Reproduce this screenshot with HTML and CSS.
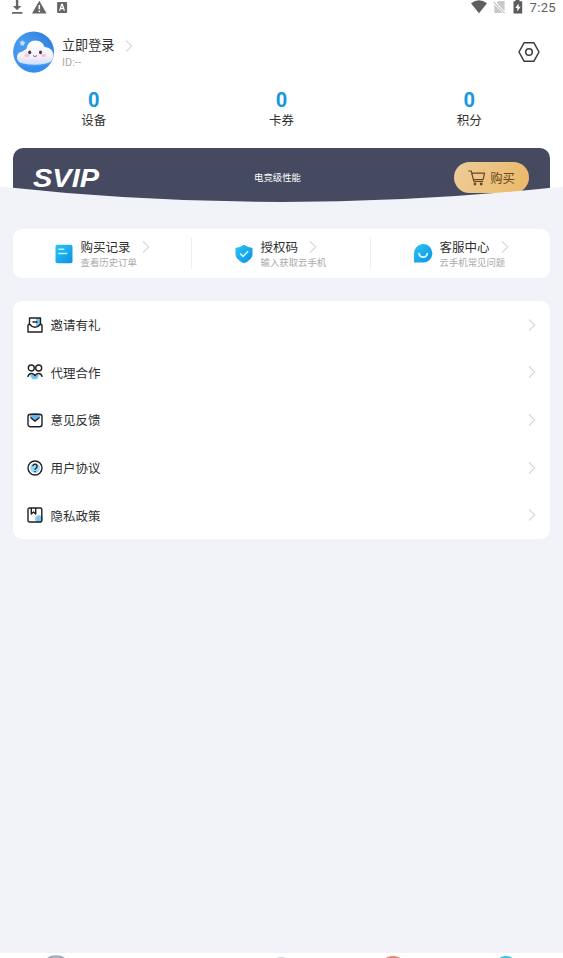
FILE: index.html
```html
<!DOCTYPE html>
<html lang="zh-CN">
<head>
<meta charset="utf-8">
<title>我的</title>
<link rel="stylesheet" href="styles.css">
</head>
<body>
<svg width="0" height="0" class="defs">
  <defs>
    <linearGradient id="blue" x1="0" y1="0" x2="1" y2="1"><stop offset="0" stop-color="#2bc6f4"/><stop offset="1" stop-color="#0c8fe6"/></linearGradient>
    <linearGradient id="sky" x1="1" y1="0" x2="0" y2="1"><stop offset="0" stop-color="#2878d8"/><stop offset=".5" stop-color="#479bee"/><stop offset="1" stop-color="#3f92ee"/></linearGradient>
    <linearGradient id="cloud" x1="0" y1="0" x2="0" y2="1"><stop offset="0" stop-color="#fff"/><stop offset=".65" stop-color="#f3f1fb"/><stop offset="1" stop-color="#cfdcf8"/></linearGradient>
    <symbol id="chevron" viewBox="0 0 8 14"><path d="M1 1.5 6.8 7 1 12.5" fill="none" stroke="currentColor" stroke-width="1.1"/></symbol>
  </defs>
</svg>
<header class="hero">
  <div class="status">
    <svg class="notices" width="80" height="15" viewBox="0 0 80 15" fill="#666">
      <path d="M15.9 0h2.4v6h3L17.1 10.2 12.9 6h3zM12 12h10.4v1.7H12z"/>
      <path fill-rule="evenodd" d="M39.3 .8 46.6 13.6H32zM38.5 5v4.3h1.6V5zM38.5 10.5v1.6h1.6v-1.6z"/>
      <path fill-rule="evenodd" d="M58 2h8.3q.8 0 .8.8v9.4q0 .8-.8.8H58q-.9 0-.9-.8V2.800q0-.8.9-.8zM61.200 3.800 59 10.800h1.300l.4-1.500h2.600l.4 1.500H65L62.800 3.800zM61.900 5.500l.8 2.600h-1.500z"/>
    </svg>
    <div class="system">
      <svg width="56" height="15" viewBox="0 0 56 15">
        <path d="M1 3.200Q9 -2.800 17 3.200L9 13.200z" fill="#5e5e5e"/>
        <path d="M24.300 4.500 32.800 13H24.300zM26.500 2.500 28.500 1h6.100v10.200z" fill="#c9c9c9"/>
        <path d="M23.500 1.800 34.800 13.300" stroke="#aaa" fill="none"/>
        <path fill-rule="evenodd" d="M45.500 0h4v1.200h2.700v12.300H43.500V1.200h2zM48.600 3.500 45.300 8h2v3.600l3.300-4.800h-2z" fill="#5c5c5c"/>
      </svg>
      <span class="clock">7:25</span>
    </div>
  </div>
  <div class="profile">
    <svg class="avatar" viewBox="0 0 42 42">
      <circle cx="20.600" cy="21" r="20.500" fill="url(#sky)"/>
      <path d="M7 34Q21 38 36 33 31 41 21 41.500 12 41 7 34z" fill="#348df1"/>
      <path d="M10 32.500Q3.500 31.500 4 25.500 4.700 20.800 9.500 20.500 11.500 18.500 13.300 18.200 14.500 9.500 22.500 9.500 29.500 9.800 31.500 16 39.500 16.500 40.500 23.500 40.600 31 33 32.500 22 35 10 32.500z" fill="url(#cloud)"/>
      <ellipse cx="14" cy="24.500" rx="2.700" ry="1.700" fill="#f9c5d6"/><ellipse cx="30.500" cy="24.500" rx="2.700" ry="1.700" fill="#f9c5d6"/>
      <ellipse cx="16.700" cy="21.300" rx="1.500" ry="1.900" fill="#4c344b"/><ellipse cx="27.500" cy="21.300" rx="1.500" ry="1.900" fill="#4c344b"/>
      <path d="M20 24.500Q22 26.800 24 24.500" fill="none" stroke="#a25b78"/>
      <path d="m9.500 9 1 1.800 2.200.5-1.700 1.600.2 2-1.900-1-2 .8.400-2.200-1.400-1.700 2.200-.2z" fill="#b8e5fb"/>
    </svg>
    <div class="identity">
      <div class="login">立即登录<svg class="arrow"><use href="#chevron"/></svg></div>
      <div class="uid">ID:--</div>
    </div>
    <svg class="settings" width="22" height="22" viewBox="0 0 22 22" fill="none" stroke="#3c3c3c" stroke-width="1.500" stroke-linejoin="round"><path d="M6.200 1.700h9.600L21 11l-5.200 9.300H6.200L1 11z"/><circle cx="11" cy="11" r="3.300"/></svg>
  </div>
  <div class="stats">
    <div><b>0</b><span>设备</span></div>
    <div><b>0</b><span>卡券</span></div>
    <div><b>0</b><span>积分</span></div>
  </div>
  <div class="banner">
    <svg class="svip" width="72" height="34" viewBox="0 0 72 34"><text x="0" y="25.500" textLength="66" lengthAdjust="spacingAndGlyphs">SVIP</text></svg>
    <span class="slogan">电竞级性能</span>
    <div class="buy"><svg width="18" height="16" viewBox="0 0 18 16" fill="none" stroke="#664621" stroke-width="1.200" stroke-linejoin="round"><path d="M.5 1h2.700l2.600 10.300h9.400M3.700 3.200h12.800l-1.300 6.300H5.400"/><circle cx="7" cy="14" r=".8" fill="#664621"/><circle cx="13.200" cy="14" r=".8" fill="#664621"/></svg>购买</div>
  </div>
  <svg class="curve" viewBox="0 0 563 20" preserveAspectRatio="none"><path d="M0 1.500Q281.500 32.500 563 1.500V20H0z" fill="#f2f3f8"/></svg>
</header>
<main>
  <section class="card actions">
    <div class="action">
      <svg class="badge" viewBox="0 0 20 20"><rect x="1.500" y=".8" width="17" height="18.400" rx="1.800" fill="url(#blue)"/><path d="M4.800 5.200h5M4.800 9.500h8" stroke="#b5f6ff" stroke-width="1.400" stroke-linecap="round"/></svg>
      <div><div class="title">购买记录<svg class="arrow"><use href="#chevron"/></svg></div><div class="hint">查看历史订单</div></div>
    </div>
    <div class="action">
      <svg class="badge" viewBox="0 0 20 20"><path d="M10 .8Q13.500 3.200 18.500 4v6.500Q18 16 10 19.300 2 16 1.500 10.500V4Q6.500 3.200 10 .8z" fill="url(#blue)"/><path d="m6.200 9.600 2.900 2.800 5-5.200" fill="none" stroke="#d5faff" stroke-width="1.500"/></svg>
      <div><div class="title">授权码<svg class="arrow"><use href="#chevron"/></svg></div><div class="hint">输入获取云手机</div></div>
    </div>
    <div class="action">
      <svg class="badge" viewBox="0 0 20 20"><path d="M1 18.500V10a9.200 9.200 0 1 1 9.200 8.500z" fill="url(#blue)"/><path d="M6 9.500a4.200 4.200 0 0 0 8.300 0" fill="none" stroke="#d5faff" stroke-width="1.700" stroke-linecap="round"/></svg>
      <div><div class="title">客服中心<svg class="arrow"><use href="#chevron"/></svg></div><div class="hint">云手机常见问题</div></div>
    </div>
  </section>
  <nav class="card menu">
    <a><svg class="glyph" viewBox="0 0 16 16"><path d="M9 1h5v7l-5 1.500z" fill="#7cc4f2"/><path d="M2.500 7.500V1h11v6.500M1 7.500V15h14V7.500M1 7.500h2Q5 10.300 8 10.300T13 7.500h2M5.500 5h5"/></svg><span>邀请有礼</span><svg class="arrow"><use href="#chevron"/></svg></a>
    <a><svg class="glyph" viewBox="0 0 16 16"><path d="M3 11.500Q8 8 12 11.500L10 15.300H5.500z" fill="#78c4ed"/><circle cx="4.300" cy="4" r="3"/><circle cx="11.700" cy="4" r="3"/><path d="M.8 12.800Q1.500 9.500 4.500 9.500 7 9.500 8 11.700 9 9.500 11.500 9.500 14.500 9.500 15.200 12.800"/></svg><span>代理合作</span><svg class="arrow"><use href="#chevron"/></svg></a>
    <a><svg class="glyph" viewBox="0 0 16 16"><path d="M3 2.500Q8-.5 13 2.500V5L8 9 3 5z" fill="#6ab5eb"/><rect x="1" y="2.300" width="14" height="12.500" rx="2.500"/><path d="m3.500 5.500 4.500 3.600 4.500-3.600"/></svg><span>意见反馈</span><svg class="arrow"><use href="#chevron"/></svg></a>
    <a><svg class="glyph" viewBox="0 0 16 16"><circle cx="8" cy="8" r="4.800" fill="#98d6f5"/><circle cx="8" cy="8" r="7"/><path d="M5.900 6.300a2.100 2.100 0 1 1 3.300 1.700Q8 8.700 8 9.700M8 11v1.200"/></svg><span>用户协议</span><svg class="arrow"><use href="#chevron"/></svg></a>
    <a><svg class="glyph" viewBox="0 0 16 16"><circle cx="12" cy="12" r="3.800" fill="#82c8ef"/><rect x="1" y="1" width="13.800" height="14" rx="1.500"/><path d="M4.300 1v6l2.200-2 2.200 2V1"/></svg><span>隐私政策</span><svg class="arrow"><use href="#chevron"/></svg></a>
  </nav>
</main>
<footer class="tabs">
  <svg width="563" height="5" viewBox="0 0 563 5"><ellipse cx="56" cy="6" rx="9" ry="3.800" fill="#a9afc1"/><ellipse cx="281" cy="6.500" rx="6" ry="2.500" fill="#cdd3e2"/><ellipse cx="393" cy="6.500" rx="8" ry="3.500" fill="#e58a78"/><ellipse cx="506" cy="6.500" rx="7" ry="3.500" fill="#39c4e6"/></svg>
</footer>
</body>
</html>
```
FILE: styles.css
```css
* { box-sizing: border-box; }
body {
  margin: 0;
  height: 958px;
  display: flex;
  flex-direction: column;
  overflow: hidden;
  background: #f2f3f8;
  color: #303030;
  font-family: Roboto, "Noto Sans CJK SC", sans-serif;
}
svg { display: block; flex: none; }
.defs { position: absolute; }
.hero { position: relative; height: 205px; background: #fff; }
.status { height: 15px; display: flex; justify-content: space-between; padding-right: 7px; }
.system { display: flex; gap: 4px; }
.clock { font-size: 13px; line-height: 16px; color: #606060; letter-spacing: .35px; }
.profile { display: flex; align-items: center; height: 42px; margin: 16px 23px 0 13px; }
.avatar { width: 42px; height: 42px; margin-right: 7px; }
.identity { flex: 1; }
.login { display: flex; align-items: center; font-size: 13.1px; line-height: 18px; margin-top: 3px; }
.arrow { width: 8px; height: 14px; color: #d8d8d8; }
.login .arrow, .title .arrow { margin-left: 11px; }
.uid { font-size: 11px; line-height: 16px; color: #aaa; }
.settings { margin-bottom: 1px; }
.stats { display: grid; grid-template-columns: repeat(3, 1fr); text-align: center; padding-top: 16px; }
.stats b { display: block; font-size: 20px; line-height: 22px; color: #1797df; }
.stats span { display: block; font-size: 12.5px; line-height: 20px; }
.banner {
  height: 57px;
  margin: 17px 13px 0;
  padding: 2px 21px 0 20px;
  display: grid;
  grid-template-columns: 221px 1fr auto;
  align-items: center;
  background: #454a60;
  color: #fff;
  border-radius: 10px 10px 0 0;
}
.svip text { font: italic bold 26px "Liberation Sans", sans-serif; fill: #fff; }
.slogan { font-size: 9.4px; margin-top: -2px; }
.buy {
  width: 75px;
  height: 31px;
  display: flex;
  align-items: center;
  justify-content: center;
  gap: 4px;
  border-radius: 16px;
  background: linear-gradient(110deg, #edcd99, #ebb866);
  color: #664621;
  font-size: 12.3px;
}
.curve { position: absolute; left: 0; bottom: 0; width: 100%; height: 20px; }
main { flex: 1; padding: 24px 13px 0; }
.card { background: #fff; border-radius: 9px; }
.actions { height: 49px; display: grid; grid-template-columns: 178px 179px 180px; align-items: center; }
.action { height: 31px; display: flex; align-items: center; padding-left: 41px; }
.action + .action { border-left: 1px solid #eee; padding-left: 42px; }
.badge { width: 20px; height: 20px; margin-right: 6.5px; }
.title { display: flex; align-items: center; font-size: 12.5px; line-height: 17px; padding-top: 1px; }
.hint { font-size: 9.4px; line-height: 14px; color: #aaa; }
.menu { height: 238px; margin-top: 23px; display: grid; grid-template-rows: repeat(5, 1fr); }
.menu a { display: flex; align-items: center; padding: 0 14px; font-size: 12.5px; }
.menu span { flex: 1; margin-left: 7.500px; }
.glyph { width: 16px; height: 16px; fill: none; stroke: #202024; stroke-width: 1.4; stroke-linejoin: round; }
.glyph [fill] { stroke: none; }
.tabs { height: 5px; background: #fff; }
```
